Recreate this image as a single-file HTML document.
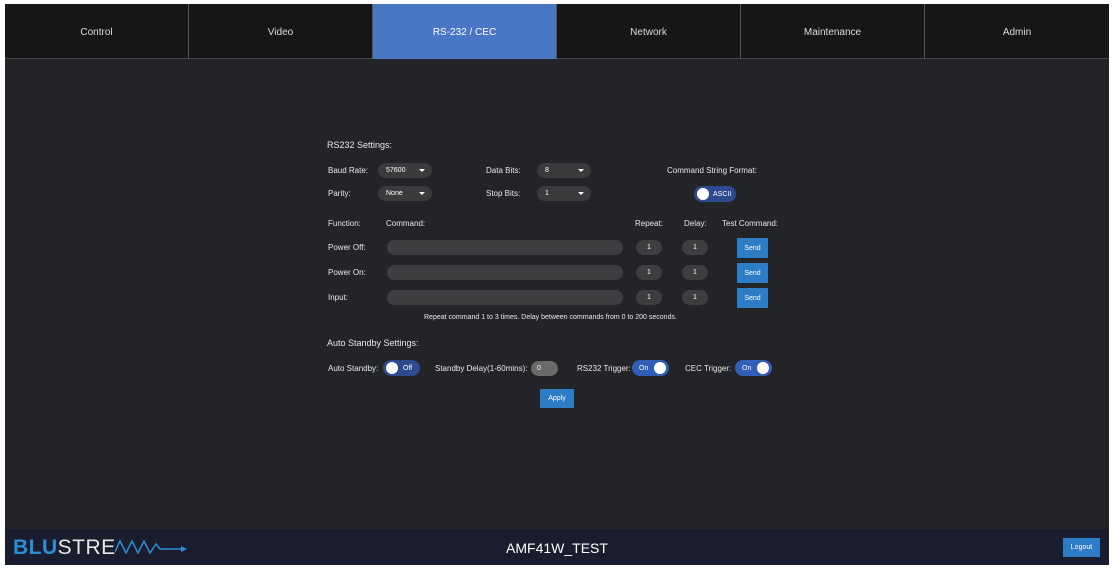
<!DOCTYPE html>
<html><head><meta charset="utf-8"><style>
*{box-sizing:border-box;margin:0;padding:0}
body{width:1120px;height:571px;background:#fff;position:relative;overflow:hidden;font-family:"Liberation Sans",sans-serif;color:#e6e6e6}
#app{position:absolute;left:5px;top:4px;width:1104px;height:561px;background:#232427}
.nav{position:absolute;left:0;top:0;width:1104px;height:55px;background:#161616;border-bottom:1px solid #444;display:flex}
.nav div{width:184px;height:55px;border-right:1px solid #555;display:flex;align-items:center;justify-content:center;font-size:10px;color:#ddd;padding-top:2px}
.nav div:last-child{border-right:none}
.nav .act{background:#4a76c6;color:#fff}
.a{position:absolute;font-size:8px;white-space:nowrap;color:#e8e8e8;line-height:10px}
.sel{position:absolute;height:15px;background:#3a3b3d;border-radius:8px;font-size:7px;color:#fff;padding-left:8px;display:flex;align-items:center}
.sel:after{content:"";position:absolute;right:7px;top:6px;border-left:3px solid transparent;border-right:3px solid transparent;border-top:3px solid #fff}
.inp{position:absolute;height:15px;background:#3d3e40;border-radius:8px;font-size:7px;display:flex;align-items:center;justify-content:center;color:#fff}
.btn{position:absolute;background:#2c7cc6;color:#fff;font-size:7px;display:flex;align-items:center;justify-content:center}
.tg{position:absolute;height:16px;background:#2d4a8e;border-radius:8px;font-size:7px;color:#fff;display:flex;align-items:center}
.tg i{position:absolute;top:2px;width:12px;height:12px;border-radius:6px;background:#fff}
.foot{position:absolute;left:0;top:525px;width:1104px;height:36px;background:#1a1d2e}
</style></head><body><div id="app">
<div class="nav"><div>Control</div><div>Video</div><div class="act">RS-232 / CEC</div><div>Network</div><div>Maintenance</div><div>Admin</div></div>

<div class="a" style="left:322px;top:136px;font-size:9px">RS232 Settings:</div>
<div class="a" style="left:323px;top:162px">Baud Rate:</div>
<div class="sel" style="left:373px;top:159px;width:54px">57600</div>
<div class="a" style="left:481px;top:162px">Data Bits:</div>
<div class="sel" style="left:532px;top:159px;width:54px">8</div>
<div class="a" style="left:662px;top:162px">Command String Format:</div>
<div class="a" style="left:323px;top:185px">Parity:</div>
<div class="sel" style="left:373px;top:182px;width:54px">None</div>
<div class="a" style="left:481px;top:185px">Stop Bits:</div>
<div class="sel" style="left:532px;top:182px;width:54px">1</div>
<div class="tg" style="left:689px;top:182px;width:42px;padding-left:19px">ASCII<i style="left:3px"></i></div>

<div class="a" style="left:323px;top:215px">Function:</div>
<div class="a" style="left:381px;top:215px">Command:</div>
<div class="a" style="left:630px;top:215px">Repeat:</div>
<div class="a" style="left:679px;top:215px">Delay:</div>
<div class="a" style="left:717px;top:215px">Test Command:</div>

<div class="a" style="left:323px;top:239px">Power Off:</div>
<div class="inp" style="left:382px;top:236px;width:236px"></div>
<div class="inp" style="left:631px;top:236px;width:26px">1</div>
<div class="inp" style="left:677px;top:236px;width:26px">1</div>
<div class="btn" style="left:732px;top:234px;width:31px;height:20px">Send</div>

<div class="a" style="left:323px;top:264px">Power On:</div>
<div class="inp" style="left:382px;top:261px;width:236px"></div>
<div class="inp" style="left:631px;top:261px;width:26px">1</div>
<div class="inp" style="left:677px;top:261px;width:26px">1</div>
<div class="btn" style="left:732px;top:259px;width:31px;height:20px">Send</div>

<div class="a" style="left:323px;top:289px">Input:</div>
<div class="inp" style="left:382px;top:286px;width:236px"></div>
<div class="inp" style="left:631px;top:286px;width:26px">1</div>
<div class="inp" style="left:677px;top:286px;width:26px">1</div>
<div class="btn" style="left:732px;top:284px;width:31px;height:20px">Send</div>

<div class="a" style="left:419px;top:309px;font-size:7px">Repeat command 1 to 3 times. Delay between commands from 0 to 200 seconds.</div>

<div class="a" style="left:322px;top:334px;font-size:9px">Auto Standby Settings:</div>
<div class="a" style="left:323px;top:360px">Auto Standby:</div>
<div class="tg" style="left:378px;top:356px;width:37px;padding-left:20px">Off<i style="left:3px"></i></div>
<div class="a" style="left:430px;top:360px">Standby Delay(1-60mins):</div>
<div class="inp" style="left:526px;top:357px;width:27px;background:#6a6a6a;justify-content:flex-start;padding-left:6px">0</div>
<div class="a" style="left:572px;top:360px">RS232 Trigger:</div>
<div class="tg" style="left:627px;top:356px;width:37px;padding-left:7px;background:#2f5fb8">On<i style="right:3px"></i></div>
<div class="a" style="left:680px;top:360px">CEC Trigger:</div>
<div class="tg" style="left:730px;top:356px;width:37px;padding-left:7px;background:#2f5fb8">On<i style="right:3px"></i></div>
<div class="btn" style="left:535px;top:385px;width:34px;height:19px">Apply</div>

<div class="foot">
<div style="position:absolute;left:8px;top:8px;font-size:21px;line-height:22px;white-space:nowrap;letter-spacing:0.5px"><span style="color:#2a8fd6;font-weight:bold">BLU</span><span style="color:#e8e8e8">STRE</span></div>
<svg style="position:absolute;left:110px;top:9px" width="72" height="18" viewBox="0 0 72 18"><path d="M0 14 L5 3 L11 15 L17 3 L23 15 L29 3 L35 15 L41 6 L45 11 L68 11" fill="none" stroke="#2a8fd6" stroke-width="1.5"/><path d="M66 8 L72 11 L66 14 Z" fill="#2a8fd6"/></svg>
<div style="position:absolute;left:0;width:1104px;top:11px;text-align:center;font-size:14px;color:#fff">AMF41W_TEST</div>
<div class="btn" style="left:1058px;top:9px;width:37px;height:19px">Logout</div>
</div>
</div></body></html>
